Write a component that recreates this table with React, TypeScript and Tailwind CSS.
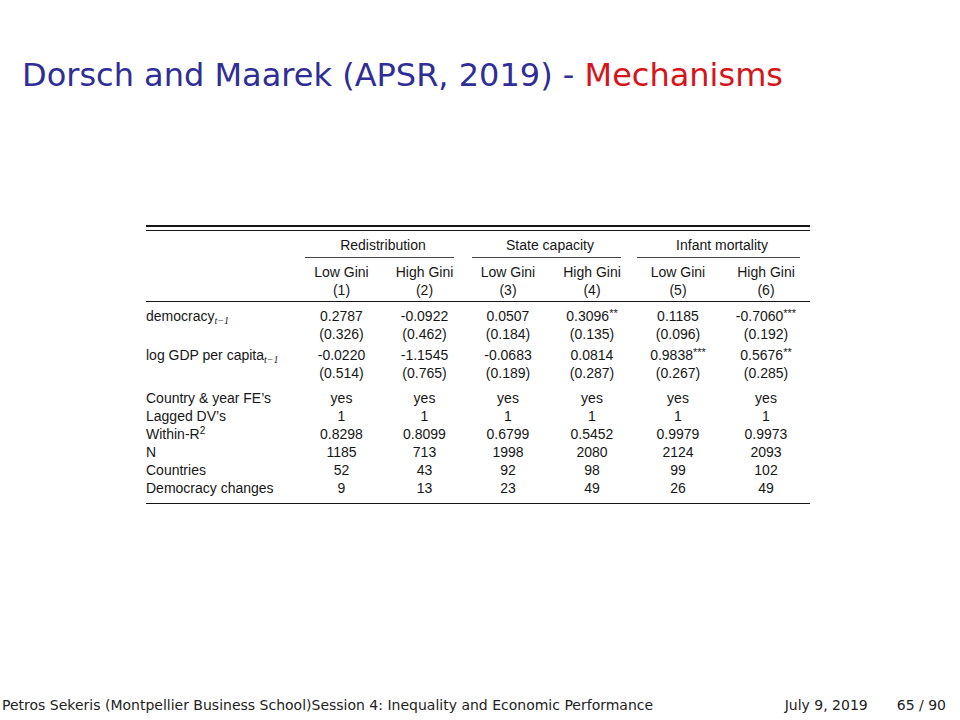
import React from 'react';

const cols = 'grid grid-cols-[154px_83px_83px_84px_84px_88px_88px]';

function Stars({ n }: { n: number }) {
  if (!n) return null;
  return <span className="text-[11px] leading-none relative -top-[4px]">{'*'.repeat(n)}</span>;
}

function Lag() {
  return (
    <sub className="text-[10px] leading-none italic" style={{ fontFamily: '"Liberation Serif", serif' }}>
      t−1
    </sub>
  );
}

type Coef = [string, number];

const coefRows: { label: React.ReactNode; coefs: Coef[]; ses: string[] }[] = [
  {
    label: (
      <>
        democracy<Lag />
      </>
    ),
    coefs: [
      ['0.2787', 0],
      ['-0.0922', 0],
      ['0.0507', 0],
      ['0.3096', 2],
      ['0.1185', 0],
      ['-0.7060', 3],
    ],
    ses: ['(0.326)', '(0.462)', '(0.184)', '(0.135)', '(0.096)', '(0.192)'],
  },
  {
    label: (
      <>
        log GDP per capita<Lag />
      </>
    ),
    coefs: [
      ['-0.0220', 0],
      ['-1.1545', 0],
      ['-0.0683', 0],
      ['0.0814', 0],
      ['0.9838', 3],
      ['0.5676', 2],
    ],
    ses: ['(0.514)', '(0.765)', '(0.189)', '(0.287)', '(0.267)', '(0.285)'],
  },
];

const statRows: { label: React.ReactNode; vals: string[] }[] = [
  { label: 'Country & year FE’s', vals: ['yes', 'yes', 'yes', 'yes', 'yes', 'yes'] },
  { label: 'Lagged DV’s', vals: ['1', '1', '1', '1', '1', '1'] },
  {
    label: (
      <>
        Within-R<span className="text-[10px] leading-none relative -top-[5px]">2</span>
      </>
    ),
    vals: ['0.8298', '0.8099', '0.6799', '0.5452', '0.9979', '0.9973'],
  },
  { label: 'N', vals: ['1185', '713', '1998', '2080', '2124', '2093'] },
  { label: 'Countries', vals: ['52', '43', '92', '98', '99', '102'] },
  { label: 'Democracy changes', vals: ['9', '13', '23', '49', '26', '49'] },
];

const groups = [
  { name: 'Redistribution', line: 'ml-[5px] mr-[12px]' },
  { name: 'State capacity', line: 'ml-[6px] mr-[13px]' },
  { name: 'Infant mortality', line: 'ml-[3px] mr-[10px]' },
];

function ResultsTable() {
  return (
    <div
      className="ml-[146px] mt-[128px] w-[664px] text-[14px] leading-[18px] text-[#161616]"
      style={{ fontFamily: '"Liberation Sans", Arial, sans-serif' }}
    >
      <div className="border-t-2 border-[#161616]" />
      <div className="mt-[3px] border-t-[1.5px] border-[#161616]" />

      <div className={`${cols} pt-[5px]`}>
        <div />
        {groups.map((g) => (
          <div key={g.name} className="col-span-2 flex flex-col">
            <div className="text-center">{g.name}</div>
            <div className={`mt-[3px] border-t border-[#444] ${g.line}`} />
          </div>
        ))}
      </div>

      <div className={`${cols} pt-[5px]`}>
        <div />
        {[1, 2, 3, 4, 5, 6].map((i) => (
          <div key={i} className="text-center">
            <div>{i % 2 ? 'Low Gini' : 'High Gini'}</div>
            <div>({i})</div>
          </div>
        ))}
      </div>

      <div className="mt-[2px] border-t-[1.5px] border-[#161616]" />

      <div className="pt-[5px] flex flex-col gap-[3px]">
        {coefRows.map((r, k) => (
          <div key={k} className={cols}>
            <div className="whitespace-nowrap">{r.label}</div>
            {r.coefs.map(([v, s], i) => (
              <div key={i} className="text-center">
                <div className="whitespace-nowrap">
                  {v}
                  <Stars n={s} />
                </div>
                <div>{r.ses[i]}</div>
              </div>
            ))}
          </div>
        ))}
      </div>

      <div className="pt-[7px]">
        {statRows.map((r, k) => (
          <div key={k} className={cols}>
            <div className="whitespace-nowrap">{r.label}</div>
            {r.vals.map((v, i) => (
              <div key={i} className="text-center">
                {v}
              </div>
            ))}
          </div>
        ))}
      </div>

      <div className="mt-[6px] border-t-[1.5px] border-[#161616]" />
    </div>
  );
}

export default function App() {
  return (
    <div
      className="w-[960px] h-[720px] bg-white flex flex-col overflow-hidden"
      style={{ fontFamily: '"DejaVu Sans", sans-serif' }}
    >
      <h1 className="pl-[22px] pt-[53px] text-[32px] leading-[44px] text-[#2e2e96] whitespace-nowrap">
        Dorsch and Maarek (APSR, 2019) - <span className="text-[#d6141b]">Mechanisms</span>
      </h1>

      <ResultsTable />

      <footer className="mt-auto pb-[7px] flex items-center text-[14px] leading-[16px] text-[#222] whitespace-nowrap">
        <span className="pl-[2px]">Petros Sekeris (Montpellier Business School)</span>
        <span>Session 4: Inequality and Economic Performance</span>
        <span className="ml-auto">July 9, 2019</span>
        <span className="ml-[29px] mr-[14px]">65 / 90</span>
      </footer>
    </div>
  );
}
